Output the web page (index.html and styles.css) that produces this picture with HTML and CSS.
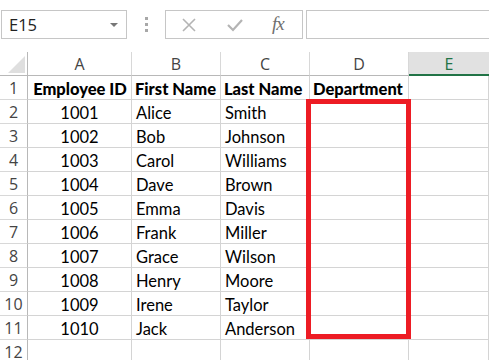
FILE: index.html
```html
<!DOCTYPE html>
<html>
<head>
<meta charset="utf-8">
<link rel="stylesheet" href="styles.css">
</head>
<body>
<div class="toolbar">
  <div class="namebox"><span class="ref">E15</span><span class="dd"></span></div>
  <div class="grip"><i></i><i></i><i></i></div>
  <div class="buttons">
    <svg class="ico x" width="16" height="16" viewBox="0 0 16 16"><path d="M2 2 L14 14 M14 2 L2 14" stroke="#b4b4b4" stroke-width="1.6" fill="none"/></svg>
    <svg class="ico chk" width="18" height="16" viewBox="0 0 18 16"><path d="M2 8 L7 13 L16 3" stroke="#b4b4b4" stroke-width="2.2" fill="none"/></svg>
    <span class="fx">fx</span>
  </div>
  <div class="formula"></div>
</div>
<div class="sheet">
  <div class="grid">
    <div class="corner"><span class="tri"></span></div>
    <div class="ch">A</div><div class="ch">B</div><div class="ch">C</div><div class="ch">D</div><div class="ch sel">E</div>

    <div class="rh">1</div><div class="c b ctr">Employee ID</div><div class="c b">First Name</div><div class="c b">Last Name</div><div class="c b">Department</div><div class="c"></div>
    <div class="rh">2</div><div class="c ctr">1001</div><div class="c">Alice</div><div class="c">Smith</div><div class="c"></div><div class="c"></div>
    <div class="rh">3</div><div class="c ctr">1002</div><div class="c">Bob</div><div class="c">Johnson</div><div class="c"></div><div class="c"></div>
    <div class="rh">4</div><div class="c ctr">1003</div><div class="c">Carol</div><div class="c">Williams</div><div class="c"></div><div class="c"></div>
    <div class="rh">5</div><div class="c ctr">1004</div><div class="c">Dave</div><div class="c">Brown</div><div class="c"></div><div class="c"></div>
    <div class="rh">6</div><div class="c ctr">1005</div><div class="c">Emma</div><div class="c">Davis</div><div class="c"></div><div class="c"></div>
    <div class="rh">7</div><div class="c ctr">1006</div><div class="c">Frank</div><div class="c">Miller</div><div class="c"></div><div class="c"></div>
    <div class="rh">8</div><div class="c ctr">1007</div><div class="c">Grace</div><div class="c">Wilson</div><div class="c"></div><div class="c"></div>
    <div class="rh">9</div><div class="c ctr">1008</div><div class="c">Henry</div><div class="c">Moore</div><div class="c"></div><div class="c"></div>
    <div class="rh">10</div><div class="c ctr">1009</div><div class="c">Irene</div><div class="c">Taylor</div><div class="c"></div><div class="c"></div>
    <div class="rh">11</div><div class="c ctr">1010</div><div class="c">Jack</div><div class="c">Anderson</div><div class="c"></div><div class="c"></div>
    <div class="rh">12</div><div class="c"></div><div class="c"></div><div class="c"></div><div class="c"></div><div class="c"></div>
  </div>
  <div class="highlight"></div>
</div>
</body>
</html>
```
FILE: styles.css
```css
html, body {
  margin: 0;
  padding: 0;
  background: #fff;
  overflow: hidden;
}
body {
  width: 489px;
  height: 360px;
  font-family: "Lato", "Open Sans", sans-serif;
}
.toolbar {
  display: flex;
  align-items: flex-start;
  padding-top: 10px;
  height: 52px;
  box-sizing: border-box;
}
.namebox {
  margin-left: 1px;
  width: 126px;
  height: 29px;
  box-sizing: border-box;
  border: 1px solid #c6c6c6;
  display: flex;
  align-items: center;
  justify-content: space-between;
  padding: 0 8px 0 7px;
  font-family: "Open Sans", sans-serif;
  font-size: 16.5px;
  color: #222;
}
.dd {
  width: 0;
  height: 0;
  border-left: 4px solid transparent;
  border-right: 4px solid transparent;
  border-top: 4px solid #777;
  margin-top: 1px;
}
.grip {
  width: 38px;
  height: 29px;
  display: flex;
  flex-direction: column;
  align-items: center;
  justify-content: center;
  gap: 3px;
}
.grip i {
  display: block;
  width: 3px;
  height: 3px;
  background: #a8a8a8;
}
.buttons {
  width: 138px;
  height: 29px;
  box-sizing: border-box;
  border: 1px solid #c6c6c6;
  display: flex;
  align-items: center;
  padding-left: 15px;
}
.ico.x { margin-right: 29px; }
.ico.chk { margin-right: 28px; }
.fx {
  font-family: "Liberation Serif", serif;
  font-style: italic;
  font-size: 19px;
  color: #6f6f6f;
  letter-spacing: -1px;
  margin-top: -2px;
}
.formula {
  margin-left: 3px;
  flex: 1;
  height: 29px;
  box-sizing: border-box;
  border: 1px solid #c6c6c6;
  border-right: none;
}
.sheet {
  position: relative;
}
.grid {
  display: grid;
  grid-template-columns: 28px 104px 89px 89px 99px 80px;
  grid-template-rows: repeat(13, 24px);
}
.corner {
  position: relative;
  border-right: 1px solid #b8b8b8;
  border-bottom: 1px solid #b8b8b8;
}
.tri {
  position: absolute;
  right: 2px;
  bottom: 2px;
  width: 0;
  height: 0;
  border-left: 17px solid transparent;
  border-bottom: 17px solid #dfdfdf;
}
.ch {
  border-right: 1px solid #d8d8d8;
  border-bottom: 1px solid #b8b8b8;
  display: flex;
  align-items: center;
  justify-content: center;
  font-family: "Open Sans", sans-serif;
  font-size: 16px;
  color: #444;
  padding-top: 1px;
}
.ch.sel {
  background: #e1e1e1;
  border-bottom: 2px solid #217346;
  color: #217346;
  border-right: none;
}
.rh {
  border-right: 1px solid #b8b8b8;
  border-bottom: 1px solid #d8d8d8;
  display: flex;
  align-items: center;
  justify-content: center;
  font-family: "Open Sans", sans-serif;
  font-size: 16px;
  color: #444;
  padding-top: 1px;
}
.c {
  border-right: 1px solid #d4d4d4;
  border-bottom: 1px solid #d4d4d4;
  display: flex;
  align-items: center;
  padding: 2px 4px 0 4px;
  font-size: 16.5px;
  color: #000;
  white-space: nowrap;
  overflow: hidden;
}
.c.ctr { justify-content: center; }
.c.b { font-weight: 900; padding-left: 3px; padding-right: 2px; }
.highlight {
  position: absolute;
  left: 306px;
  top: 47px;
  width: 105px;
  height: 240px;
  box-sizing: border-box;
  border: 5px solid #ed1c24;
  pointer-events: none;
}
```
